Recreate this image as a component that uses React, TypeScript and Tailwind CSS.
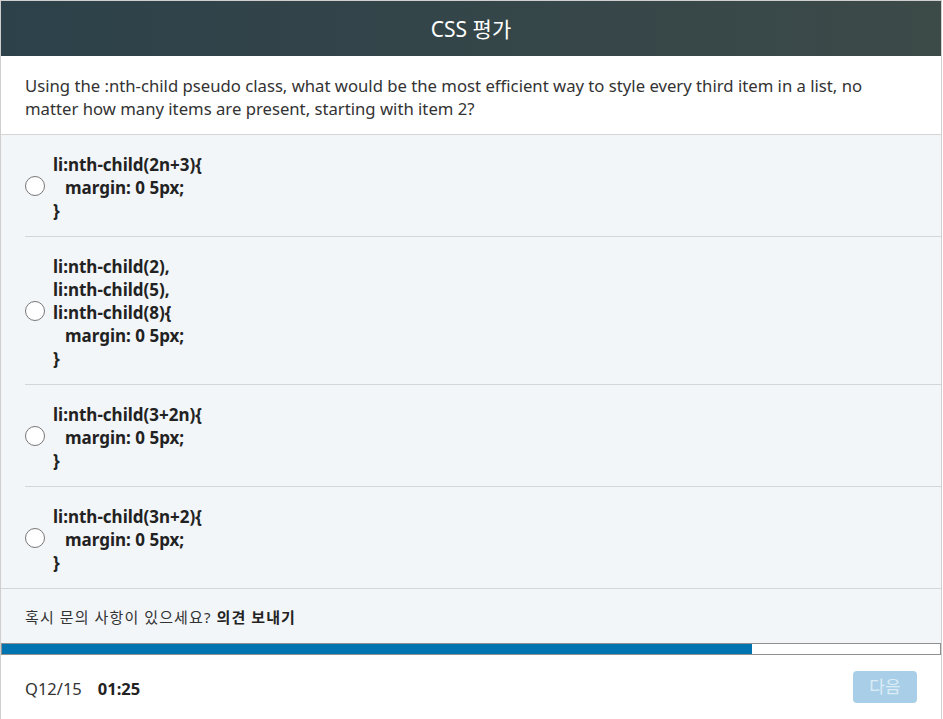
import React from 'react';

const options = [
  ['li:nth-child(2n+3){', '  margin: 0 5px;', '}'],
  ['li:nth-child(2),', 'li:nth-child(5),', 'li:nth-child(8){', '  margin: 0 5px;', '}'],
  ['li:nth-child(3+2n){', '  margin: 0 5px;', '}'],
  ['li:nth-child(3n+2){', '  margin: 0 5px;', '}'],
];

export default function App() {
  return (
    <div
      className="w-[942px] h-[719px] bg-white border border-[#cfcfcf] border-b-0 flex flex-col text-[#222]"
      style={{ fontFamily: '"Noto Sans", "Noto Sans CJK KR", sans-serif' }}
    >
      <header className="h-[55px] shrink-0 flex items-center justify-center pt-[3px] bg-gradient-to-r from-[#2d414a] to-[#3c4a48] text-white text-[21px]">
        CSS 평가
      </header>

      <div className="px-6 pt-[18px] pb-[14px] border-b border-[#d6d6d6] text-[16.7px] leading-[23px] text-[#333]">
        Using the :nth-child pseudo class, what would be the most efficient way to style every third item in a list, no
        <br />
        matter how many items are present, starting with item 2?
      </div>

      <div className="bg-[#f2f6f9]">
        <div className="pl-6">
          {options.map((lines, i) => (
            <label
              key={i}
              className={`flex items-center gap-2 pt-[18px] pb-[14px] ${i < options.length - 1 ? 'border-b border-[#d3d6d8]' : ''}`}
            >
              <span className="w-5 h-5 -mt-1 rounded-full border border-[#777] bg-white shrink-0" />
              <span className="font-bold text-[17px] leading-[23px] text-[#222]">
                {lines.map((line, j) => (
                  <div key={j} className={line.startsWith('  ') ? 'pl-3' : ''}>
                    {line.trim()}
                  </div>
                ))}
              </span>
            </label>
          ))}
        </div>
        <div className="border-t border-[#d3d6d8] h-[55px] px-6 pt-[2px] flex items-center text-[15px] tracking-[1.1px] text-[#333]">
          혹시 문의 사항이 있으세요?&nbsp;<span className="font-bold text-[#222]">의견 보내기</span>
        </div>
      </div>

      <div className="h-[12px] border border-[#8f8f8f] bg-white flex">
        <div className="h-full bg-[#0073b1] w-[750px]" />
      </div>

      <div className="flex-1 flex items-center justify-between px-6">
        <div className="flex items-center gap-4 text-[16.5px] pt-[5px]">
          <span className="text-[#333]">Q12/15</span>
          <span className="font-bold">01:25</span>
        </div>
        <button className="w-16 h-[32px] rounded bg-[#a8cfe7] text-[#dcecf6] text-[17px]">다음</button>
      </div>
    </div>
  );
}
